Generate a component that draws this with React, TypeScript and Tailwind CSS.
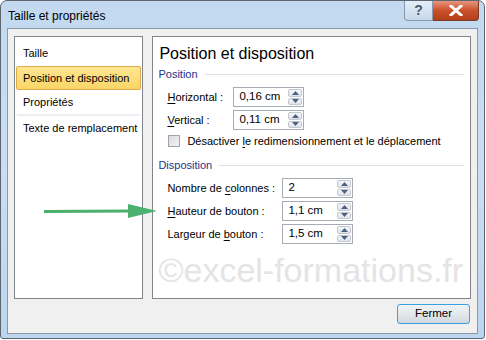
import React from 'react';

const font = { fontFamily: '"Liberation Sans", Arial, sans-serif' };

const U: React.FC<{ children: React.ReactNode }> = ({ children }) => (
  <span className="underline underline-offset-2">{children}</span>
);

const Spinner = () => (
  <div className="flex flex-col gap-[1px] w-[15px] h-full py-[1px] pr-[1px]">
    <div className="flex-1 flex items-center justify-center border border-[#c3c8d0] rounded-[2px] bg-gradient-to-b from-[#f6f7f9] to-[#dfe3e8]">
      <svg width="7" height="4" viewBox="0 0 7 4"><path d="M0 4 L3.5 0 L7 4 Z" fill="#4d6185" /></svg>
    </div>
    <div className="flex-1 flex items-center justify-center border border-[#c3c8d0] rounded-[2px] bg-gradient-to-b from-[#f6f7f9] to-[#dfe3e8]">
      <svg width="7" height="4" viewBox="0 0 7 4"><path d="M0 0 L3.5 4 L7 0 Z" fill="#4d6185" /></svg>
    </div>
  </div>
);

const Field: React.FC<{ value: string }> = ({ value }) => (
  <div className="w-[71px] h-[20px] border border-[#a5acb5] bg-white flex items-center">
    <span className="flex-1 pl-[5px] text-[11.5px] text-black leading-none whitespace-nowrap">{value}</span>
    <Spinner />
  </div>
);

const Row: React.FC<{ label: React.ReactNode; value: string; labelW: string }> = ({ label, value, labelW }) => (
  <div className="flex items-center pl-[9px]">
    <div className={`${labelW} text-[11px] text-black whitespace-nowrap`}>{label}</div>
    <Field value={value} />
  </div>
);

const GroupTitle: React.FC<{ title: string }> = ({ title }) => (
  <div className="flex items-center gap-[7px] pr-[6px] h-[14px]">
    <span className="text-[11px] text-[#1e3287] whitespace-nowrap">{title}</span>
    <div className="flex-1 h-px bg-[#dcdfe3]" />
  </div>
);

export default function App() {
  return (
    <div className="w-[486px] h-[340px] bg-white relative overflow-hidden" style={font}>
      <div className="w-[485px] h-[339px] rounded-t-[7px] rounded-b-[3px] border border-[#5b6670] bg-gradient-to-b from-[#c2d9f0] via-[#c9def3] to-[#bdd5ee] flex flex-col">
        {/* title bar */}
        <div className="h-[27px] flex items-start justify-between pl-[7px] pr-[5px] shrink-0">
          <span className="text-[12px] text-black mt-[6px] whitespace-nowrap">Taille et propriétés</span>
          <div className="flex">
            <div className="w-[29px] h-[20px] border border-[#8a9aae] border-t-0 rounded-bl-[4px] bg-gradient-to-b from-[#e4eef8] to-[#c7d8ea] flex items-center justify-center text-[#4a5a6e] font-bold text-[14px]">?</div>
            <div className="w-[46px] h-[20px] border border-[#7a3a28] border-t-0 border-l-0 rounded-br-[4px] bg-gradient-to-b from-[#e7957d] via-[#c9502a] to-[#b6401c] flex items-center justify-center">
              <svg width="14" height="11" viewBox="0 0 14 11"><path d="M2 1 L12 10 M12 1 L2 10" stroke="#ffffff" strokeWidth="3" strokeLinecap="square" /></svg>
            </div>
          </div>
        </div>
        {/* body */}
        <div className="mx-[6px] mb-[4px] flex-1 border border-[#8d99a6] bg-[#f0f0f0] flex flex-col px-[6px] pt-[7px]">
          <div className="flex gap-[9px] h-[263px]">
            <div className="w-[130px] border border-[#82868c] bg-white flex flex-col pt-[5px] px-[1px] whitespace-nowrap text-[11px] text-black">
              <div className="h-[22px] flex items-center pl-[7px]">Taille</div>
              <div className="h-[24px] flex items-center pl-[6px] border border-[#e0a94a] rounded-[2px] bg-gradient-to-b from-[#fde591] to-[#fbd666] mt-[2px]">Position et disposition</div>
              <div className="h-[24px] flex items-center pl-[7px]">Propriétés</div>
              <div className="h-[2px] bg-[#eceef1] mx-[1px]" />
              <div className="h-[24px] flex items-center pl-[7px]">Texte de remplacement</div>
            </div>
            <div className="w-[320px] border border-[#82868c] bg-white flex flex-col pl-[5px] relative overflow-hidden">
              <div className="text-[16px] leading-[20px] text-black mt-[7px] pl-[1px] whitespace-nowrap">Position et disposition</div>
              <div className="mt-[3px]"><GroupTitle title="Position" /></div>
              <div className="flex flex-col gap-[3px] mt-[6px]">
                <Row labelW="w-[66px]" label={<><U>H</U>orizontal :</>} value="0,16 cm" />
                <Row labelW="w-[66px]" label={<><U>V</U>ertical :</>} value="0,11 cm" />
              </div>
              <div className="flex items-center pl-[10px] mt-[5px] h-[12px]">
                <div className="w-[12px] h-[12px] border border-[#a0a4aa] bg-gradient-to-br from-[#d9dbde] to-[#f2f3f4]" />
                <span className="ml-[7px] text-[11px] text-black whitespace-nowrap">Désactiver <U>l</U>e redimensionnement et le déplacement</span>
              </div>
              <div className="mt-[11px]"><GroupTitle title="Disposition" /></div>
              <div className="flex flex-col gap-[3px] mt-[6px]">
                <Row labelW="w-[115px]" label={<>Nombre de <U>c</U>olonnes :</>} value="2" />
                <Row labelW="w-[115px]" label={<><U>H</U>auteur de bouton :</>} value="1,1 cm" />
                <Row labelW="w-[115px]" label={<>Largeur de <U>b</U>outon :</>} value="1,5 cm" />
              </div>
              <div className="mt-[6px] text-[34px] leading-[40px] text-[#e4e4e4] whitespace-nowrap">©excel-formations.fr</div>
            </div>
          </div>
          <div className="flex justify-end pr-[1px] mt-[5px]">
            <div className="w-[73px] h-[20px] border border-[#3c9fe0] rounded-[3px] bg-gradient-to-b from-[#eef3f7] via-[#e3e8ec] to-[#d2d8dd] flex items-center justify-center text-[11.5px] text-black">Fermer</div>
          </div>
        </div>
      </div>
      {/* green arrow */}
      <svg className="absolute left-[40px] top-[202px]" width="120" height="18" viewBox="0 0 120 18">
        <path d="M4 9.5 L92 9" stroke="#4cb06e" strokeWidth="3" />
        <path d="M88 2 L117 9 L88 16 Z" fill="#4cb06e" />
      </svg>
    </div>
  );
}
